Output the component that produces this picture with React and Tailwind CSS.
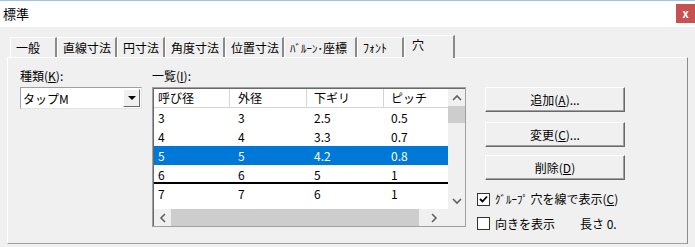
import React from 'react';

const rows = [
  ['3', '3', '2.5', '0.5'],
  ['4', '4', '3.3', '0.7'],
  ['5', '5', '4.2', '0.8'],
  ['6', '6', '5', '1'],
  ['7', '7', '6', '1'],
];

const colW = ['w-[76px] pl-[4px]', 'w-[77px] pl-[8px]', 'w-[77px] pl-[7px]', 'flex-1 pl-[7px]'];

function Chevron({ dir }) {
  const d = {
    up: 'M1 6 L5 2 L9 6',
    down: 'M1 2 L5 6 L9 2',
    left: 'M6 1 L2 5 L6 9',
    right: 'M2 1 L6 5 L2 9',
  }[dir];
  const vertical = dir === 'up' || dir === 'down';
  return (
    <svg width={vertical ? 10 : 8} height={vertical ? 8 : 10} viewBox={vertical ? '0 0 10 8' : '0 0 8 10'}>
      <path d={d} fill="none" stroke="#606060" strokeWidth="1.6" />
    </svg>
  );
}

function Tab({ label, width, active }) {
  if (active) {
    return (
      <div className={`${width} relative z-10 h-[23px] bg-[#f0f0f0] border-t border-l border-white border-r-2 border-r-[#8a8a8a] pl-[7px] leading-[17px]`}>
        {label}
      </div>
    );
  }
  return (
    <div className={`${width} mt-[2px] h-[20px] bg-[#f0f0f0] border-t border-l border-white border-r-2 border-r-[#8a8a8a] pl-[5px] leading-[19px] whitespace-nowrap`}>
      {label}
    </div>
  );
}

function Button({ children }) {
  return (
    <div className="w-[140px] h-[25px] flex items-center justify-center bg-[#f0f0f0] border border-t-white border-l-white border-r-[#696969] border-b-[#696969] shadow-[inset_-1px_-1px_0_#a0a0a0]">
      {children}
    </div>
  );
}

function Checkbox({ checked }) {
  return (
    <div className="w-[13px] h-[13px] bg-white border border-[#333333] flex items-center justify-center">
      {checked && (
        <svg width="9" height="9" viewBox="0 0 9 9">
          <path d="M1 4 L3.5 6.5 L8 1.5" fill="none" stroke="#000" strokeWidth="1.8" />
        </svg>
      )}
    </div>
  );
}

export default function App() {
  return (
    <div className="w-[695px] h-[247px] bg-[#f0f0f0] overflow-hidden text-[12px] leading-[15px] text-black font-['Noto_Sans_CJK_JP','Noto_Sans',sans-serif]">
      {/* title bar */}
      <div className="h-[27px] bg-white border-t border-[#9cc5ec] flex items-start justify-between">
        <div className="pl-[3px] pt-[5px] text-[13px]">標準</div>
        <div className="mt-[3px] w-[19px] h-[19px] bg-[#c75050] text-white font-bold flex items-center justify-center text-[11px] leading-none">x</div>
      </div>

      <div className="px-[7px] pt-[8px]">
        {/* tabs */}
        <div className="flex items-start h-[22px] pl-[3px]">
          <Tab label="一般" width="w-[47px]" />
          <Tab label="直線寸法" width="w-[60px]" />
          <Tab label="円寸法" width="w-[48px]" />
          <Tab label="角度寸法" width="w-[60px]" />
          <Tab label="位置寸法" width="w-[59px]" />
          <Tab label={<><span className="text-[11px]">ﾊﾞﾙｰﾝ･</span>座標</>} width="w-[73px]" />
          <Tab label={<span className="text-[12px]">ﾌｫﾝﾄ</span>} width="w-[47px]" />
          <Tab label="穴" width="w-[51px]" active />
        </div>

        {/* panel */}
        <div className="w-[681px] h-[187px] border border-t-white border-l-white border-r-[#8a8a8a] border-b-[#a0a0a0] flex pl-[12px] pt-[10px]">
          {/* type */}
          <div className="w-[122px]">
            <div>種類(<span className="underline">K</span>):</div>
            <div className="mt-[4px] h-[22px] bg-white border border-t-[#a0a0a0] border-l-[#a0a0a0] border-r-[#e3e3e3] border-b-[#e3e3e3] flex items-center justify-between pl-[2px] pr-[1px]">
              <span>タップM</span>
              <div className="w-[17px] h-[18px] bg-[#f0f0f0] border border-t-white border-l-white border-r-[#696969] border-b-[#696969] flex items-center justify-center">
                <div className="w-0 h-0 border-l-[4px] border-r-[4px] border-t-[4px] border-l-transparent border-r-transparent border-t-black" />
              </div>
            </div>
          </div>

          {/* list */}
          <div className="ml-[10px] w-[314px]">
            <div>一覧(<span className="underline">I</span>):</div>
            <div className="mt-[4px] h-[140px] bg-white border border-[#a0a0a0] shadow-[inset_1px_1px_0_#696969] flex flex-col pl-[1px] pt-[1px]">
              <div className="flex h-[121px]">
                <div className="w-[294px]">
                  <div className="flex h-[19px] border-b border-[#d5d5d5]">
                    {['呼び径', '外径', '下ギリ', 'ピッチ'].map((h, i) => (
                      <div key={h} className={`${colW[i]} ${i < 3 ? 'border-r border-[#d5d5d5]' : ''} leading-[18px]`}>{h}</div>
                    ))}
                  </div>
                  {rows.map((r, ri) => (
                    <div
                      key={ri}
                      className={`flex h-[19px] leading-[19px] ${ri === 2 ? 'bg-[#0078d7] text-white' : ''} ${ri === 3 ? 'border-b-2 border-black leading-[17px]' : ''}`}
                    >
                      {r.map((c, ci) => (
                        <div key={ci} className={colW[ci]}>{c}</div>
                      ))}
                    </div>
                  ))}
                </div>
                <div className="w-[17px] bg-[#f0f0f0] flex flex-col">
                  <div className="h-[17px] flex items-center justify-center"><Chevron dir="up" /></div>
                  <div className="h-[17px] bg-[#cdcdcd]" />
                  <div className="flex-1" />
                  <div className="h-[17px] flex items-center justify-center"><Chevron dir="down" /></div>
                </div>
              </div>
              <div className="flex h-[17px] bg-[#f0f0f0]">
                <div className="w-[17px] flex items-center justify-center"><Chevron dir="left" /></div>
                <div className="w-[248px] bg-[#cdcdcd]" />
                <div className="w-[29px] flex items-center justify-center"><Chevron dir="right" /></div>
                <div className="w-[17px]" />
              </div>
            </div>
          </div>

          {/* actions */}
          <div className="ml-[11px] pt-[19px]">
            <div className="ml-[8px]">
              <Button>追加(<span className="underline">A</span>)...</Button>
              <div className="mt-[10px]"><Button>変更(<span className="underline">C</span>)...</Button></div>
              <div className="mt-[8px]"><Button>削除(<span className="underline">D</span>)</Button></div>
            </div>
            <div className="mt-[11px] flex items-center gap-[5px]">
              <Checkbox checked />
              <span><span className="text-[11px]">ｸﾞﾙｰﾌﾟ </span>穴を線で表示(<span className="underline">C</span>)</span>
            </div>
            <div className="mt-[9px] flex items-center">
              <Checkbox />
              <span className="ml-[5px]">向きを表示</span>
              <span className="ml-[25px]">長さ 0.</span>
            </div>
          </div>
        </div>
      </div>
    </div>
  );
}
